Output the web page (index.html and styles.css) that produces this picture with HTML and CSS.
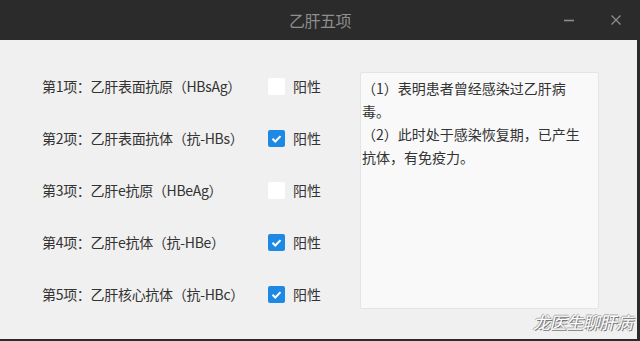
FILE: index.html
```html
<!DOCTYPE html>
<html lang="zh-CN">
<head>
<meta charset="utf-8">
<title>乙肝五项</title>
<link rel="stylesheet" href="styles.css">
</head>
<body>
<div class="window">
  <div class="titlebar">
    <div class="title">乙肝五项</div>
    <div class="controls">
      <span class="ctl min"><svg width="12" height="12" viewBox="0 0 12 12"><path d="M1 6.5h10" stroke="#8c8c8c" stroke-width="1.6"/></svg></span>
      <span class="ctl close"><svg width="12" height="12" viewBox="0 0 12 12"><path d="M1.5 1.5l9 9M10.5 1.5l-9 9" stroke="#8c8c8c" stroke-width="1.4"/></svg></span>
    </div>
  </div>
  <div class="content">
    <div class="items">
      <div class="row"><span class="label">第1项：乙肝表面抗原（HBsAg）</span><span class="box"></span><span class="pos">阳性</span></div>
      <div class="row"><span class="label">第2项：乙肝表面抗体（抗-HBs）</span><span class="box checked"><svg viewBox="0 0 17 17" width="17" height="17"><path d="M4.5 8.8l2.8 2.7 5.2-5.4" fill="none" stroke="#fff" stroke-width="2"/></svg></span><span class="pos">阳性</span></div>
      <div class="row"><span class="label">第3项：乙肝e抗原（HBeAg）</span><span class="box"></span><span class="pos">阳性</span></div>
      <div class="row"><span class="label">第4项：乙肝e抗体（抗-HBe）</span><span class="box checked"><svg viewBox="0 0 17 17" width="17" height="17"><path d="M4.5 8.8l2.8 2.7 5.2-5.4" fill="none" stroke="#fff" stroke-width="2"/></svg></span><span class="pos">阳性</span></div>
      <div class="row"><span class="label">第5项：乙肝核心抗体（抗-HBc）</span><span class="box checked"><svg viewBox="0 0 17 17" width="17" height="17"><path d="M4.5 8.8l2.8 2.7 5.2-5.4" fill="none" stroke="#fff" stroke-width="2"/></svg></span><span class="pos">阳性</span></div>
    </div>
    <div class="result">
      <p>（1）表明患者曾经感染过乙肝病毒。</p>
      <p>（2）此时处于感染恢复期，已产生抗体，有免疫力。</p>
    </div>
  </div>
  <div class="watermark">龙医生聊肝病</div>
</div>
</body>
</html>
```

FILE: styles.css
```css
* { box-sizing: border-box; }
html, body { margin: 0; padding: 0; }
body {
  width: 640px;
  height: 341px;
  overflow: hidden;
  font-family: "Noto Sans CJK SC", "Noto Sans", sans-serif;
  color: #333;
}
.window {
  position: relative;
  width: 640px;
  height: 341px;
  display: flex;
  flex-direction: column;
  background: #2b2b2b;
}
.titlebar {
  height: 40px;
  flex: none;
  display: flex;
  align-items: center;
  justify-content: center;
  position: relative;
}
.title {
  font-size: 16px;
  color: #8e8e8e;
  letter-spacing: -0.5px;
}
.controls {
  position: absolute;
  right: 18px;
  top: 14px;
  display: flex;
  gap: 35px;
}
.ctl { display: block; width: 12px; height: 12px; }
.ctl svg { display: block; }
.content {
  flex: 1;
  background: #f0f0f0;
  margin-right: 3px;
  margin-bottom: 2px;
  display: flex;
  padding: 20px 0 0 42px;
}
.items {
  width: 318px;
  display: flex;
  flex-direction: column;
}
.row {
  height: 52px;
  display: flex;
  align-items: center;
  font-size: 14px;
}
.label {
  width: 226px;
  letter-spacing: -0.3px;
}
.box {
  width: 17px;
  height: 17px;
  background: #fff;
  border-radius: 2px;
  margin-right: 8px;
  display: block;
}
.box.checked { background: #1e88e5; }
.box svg { display: block; }
.pos { font-size: 14px; }
.result {
  margin-top: 12px;
  width: 239px;
  height: 237px;
  background: #f9f9f9;
  border: 1px solid #e4e4e4;
  border-radius: 2px;
  padding: 4px 8px 0 1px;
  font-size: 14px;
  line-height: 23px;
}
.result p { margin: 0; }
.watermark {
  position: absolute;
  right: 8px;
  bottom: 7px;
  font-size: 17px;
  color: #fff;
  font-style: italic;
  letter-spacing: -0.5px;
  text-shadow: 1px 1px 0 #777, -1px 0 0 #aaa, 0 -1px 0 #aaa;
}
```
